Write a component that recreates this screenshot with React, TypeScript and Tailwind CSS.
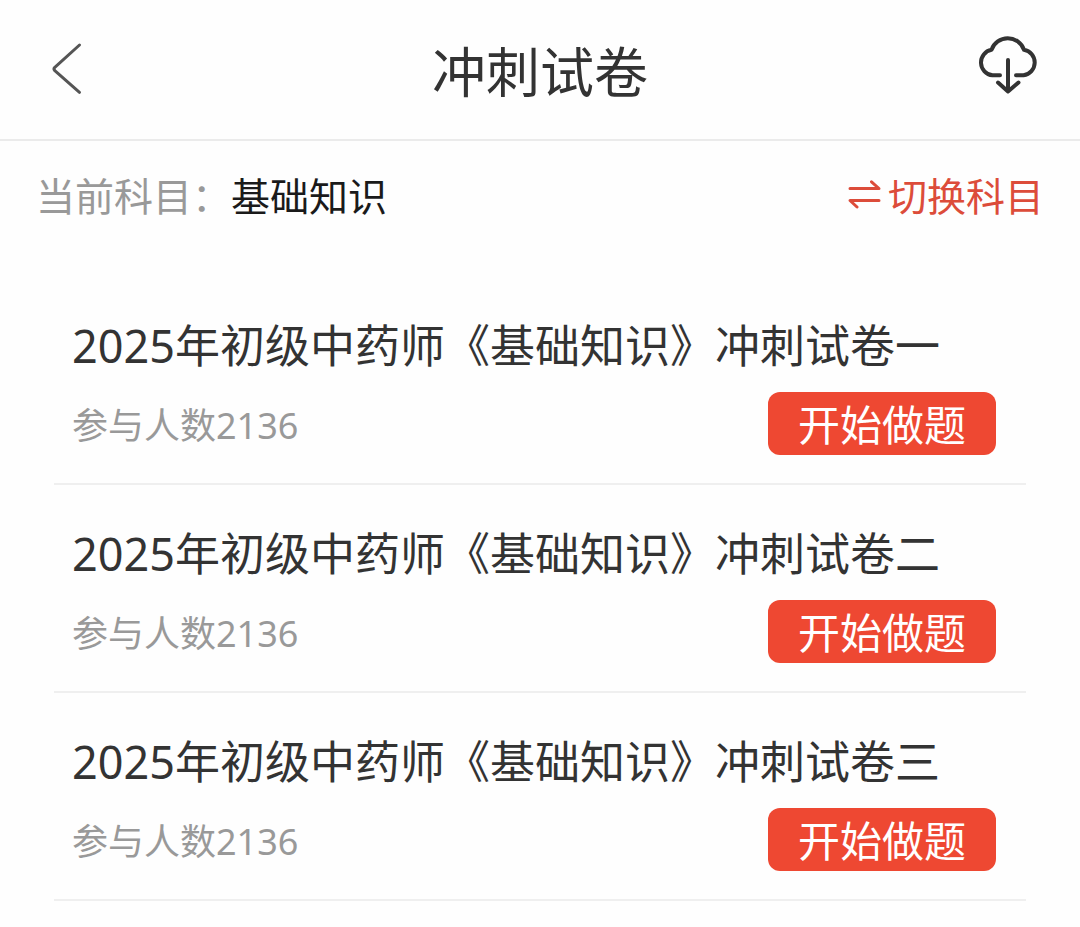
interface Paper {
  id: number;
  title: string;
  participants: number;
}

const papers: Paper[] = [
  { id: 1, title: '2025年初级中药师《基础知识》冲刺试卷一', participants: 2136 },
  { id: 2, title: '2025年初级中药师《基础知识》冲刺试卷二', participants: 2136 },
  { id: 3, title: '2025年初级中药师《基础知识》冲刺试卷三', participants: 2136 },
];

function BackIcon() {
  return (
    <svg className="h-14 w-8" viewBox="0 0 32 56" fill="none" stroke="#555555" strokeWidth="3" strokeLinecap="round" strokeLinejoin="round" aria-hidden="true">
      <path d="M29.5 3 4.800 25.300Q3.200 27 4.800 28.700L29.500 50.300" />
    </svg>
  );
}

function CloudDownloadIcon() {
  return (
    <svg className="size-16" viewBox="0 0 64 64" fill="none" stroke="#333333" strokeWidth="4" strokeLinecap="round" strokeLinejoin="round" aria-hidden="true">
      <path d="M24 43.300H16.500A12.900 12.900 0 0 1 15.500 17.800 17.200 17.200 0 0 1 48 17.800 12.900 12.900 0 0 1 47.500 43.300H40" />
      <path d="M32 28V59M22 50.500 32 59.500 42.500 50.500" />
    </svg>
  );
}

function SwitchIcon() {
  return (
    <svg className="h-8 w-9" viewBox="0 0 36 32" fill="none" stroke="#dc4c3a" strokeWidth="3" strokeLinecap="round" strokeLinejoin="round" aria-hidden="true">
      <path d="M4 8.500H33L25.500 1.800M33 20.500H4L11 27" />
    </svg>
  );
}

function PaperRow({ paper }: { paper: Paper }) {
  return (
    <li className="border-b-2 border-[#efefef] pt-[39px] pr-[30px] pb-7 pl-[18px]">
      <h2 className="text-[45px] leading-[60px] text-[#333333]">{paper.title}</h2>
      <div className="mt-4 flex items-center justify-between">
        <p className="pt-1 text-[36px] leading-[56px] text-[#999999]">参与人数{paper.participants}</p>
        <button type="button" className="rounded-xl bg-[#ee4832] px-[30px] pt-[3px] text-[42px] leading-[60px] text-white">
          开始做题
        </button>
      </div>
    </li>
  );
}

export default function App() {
  return (
    <div className="min-h-screen bg-[#fefefe] font-['Noto_Sans','Noto_Sans_CJK_SC',sans-serif]">
      <header className="grid grid-cols-[1fr_auto_1fr] items-center border-b-2 border-[#ebebeb] px-10 pt-1 pb-[3px]">
        <button type="button" aria-label="返回" className="justify-self-start p-2.5">
          <BackIcon />
        </button>
        <h1 className="pt-1 text-[54px] leading-[128px] text-[#333333]">冲刺试卷</h1>
        <button type="button" aria-label="下载" className="-mt-3 justify-self-end">
          <CloudDownloadIcon />
        </button>
      </header>
      <main>
        <div className="flex items-center justify-between px-9 pt-[25px] pb-[51px] text-[39px] leading-[60px]">
          <p className="text-[#999999]">
            当前科目：<span className="text-[#1a1a1a]">基础知识</span>
          </p>
          <button type="button" className="flex items-center gap-1.5 text-[#dc4c3a]">
            <SwitchIcon />
            切换科目
          </button>
        </div>
        <ul className="px-[54px]">
          {papers.map((paper) => (
            <PaperRow key={paper.id} paper={paper} />
          ))}
        </ul>
      </main>
    </div>
  );
}
